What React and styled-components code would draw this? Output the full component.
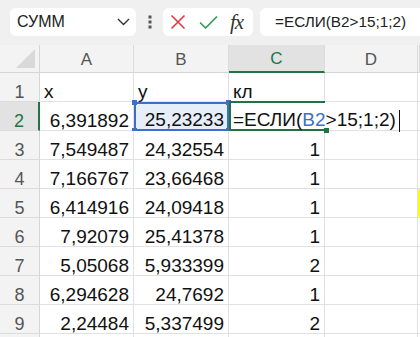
import React from "react";
import styled, { createGlobalStyle } from "styled-components";

const GlobalStyle = createGlobalStyle`
  html, body {
    margin: 0;
    padding: 0;
    background: #ffffff;
    overflow: hidden;
  }
  body {
    font-family: "Liberation Sans", Arial, sans-serif;
  }
`;

const Page = styled.div`
  width: 420px;
  height: 337px;
  overflow: hidden;
  background: #ffffff;
`;

const Toolbar = styled.div`
  display: flex;
  align-items: flex-start;
  height: 45px;
  box-sizing: border-box;
  padding: 8px 0 0 10px;
  background: #f0f0f0;
`;

const NameBox = styled.div`
  display: flex;
  align-items: center;
  justify-content: space-between;
  width: 126px;
  height: 28px;
  box-sizing: border-box;
  padding: 0 6px 0 7px;
  background: #ffffff;
  border-radius: 6px;
  font-size: 16px;
  color: #222;
`;

const Grip = styled.div`
  display: flex;
  align-items: center;
  justify-content: center;
  width: 27px;
  height: 28px;
`;

const ButtonBox = styled.div`
  display: flex;
  align-items: center;
  gap: 13px;
  width: 90px;
  height: 28px;
  box-sizing: border-box;
  padding: 0 0 0 7px;
  background: #ffffff;
  border-radius: 6px;
`;

const Fx = styled.span`
  font-family: "Liberation Serif", "Times New Roman", serif;
  font-style: italic;
  font-size: 21px;
  color: #333;
  letter-spacing: -1px;
  margin-left: -1px;
`;

const FormulaBox = styled.div`
  display: flex;
  align-items: center;
  flex: 1;
  height: 28px;
  margin-left: 7px;
  padding-left: 15px;
  background: #ffffff;
  border-radius: 6px 0 0 6px;
  font-size: 15.3px;
  color: #222;
  white-space: nowrap;
`;

const Grid = styled.div`
  display: grid;
  grid-template-columns: 40px 94px 95px 96px 93px 2px;
  grid-template-rows: 28px repeat(9, 29px) 29px;
`;

const Corner = styled.div`
  display: flex;
  align-items: flex-end;
  justify-content: flex-end;
  padding: 0 4px 4px 0;
  background: #f3f3f3;
  border-right: 1px solid #d6d6d6;
  border-bottom: 1px solid #d6d6d6;
  box-sizing: border-box;
`;

const Triangle = styled.div`
  width: 0;
  height: 0;
  border-left: 19px solid transparent;
  border-bottom: 19px solid #d9d9d9;
`;

const ColHead = styled.div`
  display: flex;
  align-items: center;
  justify-content: center;
  padding-top: 2px;
  box-sizing: border-box;
  font-size: 17px;
  color: ${(p) => (p.$active ? "#217346" : "#555")};
  background: ${(p) => (p.$active ? "#e2e2e2" : "#f3f3f3")};
  border-right: 1px solid #dcdcdc;
  border-bottom: ${(p) => (p.$active ? "2px solid #217346" : "1px solid #d6d6d6")};
`;

const RowHead = styled.div`
  display: flex;
  align-items: flex-end;
  justify-content: center;
  line-height: 1;
  box-sizing: border-box;
  padding-bottom: 0;
  font-size: 18px;
  color: ${(p) => (p.$active ? "#217346" : "#555")};
  background: ${(p) => (p.$active ? "#e2e2e2" : "#f3f3f3")};
  border-bottom: 1px solid #dcdcdc;
  border-right: ${(p) => (p.$active ? "2px solid #217346" : "1px solid #d6d6d6")};
`;

const Cell = styled.div`
  position: relative;
  display: flex;
  align-items: flex-end;
  justify-content: ${(p) => (p.$left ? "flex-start" : "flex-end")};
  padding: 0 4px;
  box-sizing: border-box;
  line-height: 1;
  font-size: 19px;
  color: #111;
  white-space: nowrap;
  background: ${(p) => p.$fill || "#ffffff"};
  border-right: 1px solid #e1e1e1;
  border-bottom: 1px solid #e1e1e1;
`;

const RefCell = styled(Cell)`
  background: #e6eefa;
  border: 2px solid #3d6fc2;
  padding-right: 3px;
`;

const Handle = styled.span`
  position: absolute;
  width: 5px;
  height: 5px;
  background: ${(p) => p.$color};
  ${(p) => (p.$top ? "top: -4px;" : "bottom: -4px;")}
  ${(p) => (p.$leftSide ? "left: -4px;" : "right: -4px;")}
`;

const EditCell = styled(Cell)`
  z-index: 2;
  overflow: visible;
  padding-left: 2px;
  border-top: 2px solid #217346;
  border-left: 2px solid #217346;
  border-bottom: 2px solid #217346;
  border-right: none;
  margin-top: -1px;
`;

const Ref = styled.span`
  color: #3d6fc2;
`;

const Caret = styled.span`
  flex-shrink: 0;
  display: inline-block;
  width: 1px;
  height: 22px;
  margin-left: 3px;
  margin-bottom: -3px;
  background: #111;
`;

const rows = [
  ["x", "y", "кл"],
  ["6,391892", "25,23233", null],
  ["7,549487", "24,32554", "1"],
  ["7,166767", "23,66468", "1"],
  ["6,414916", "24,09418", "1"],
  ["7,92079", "25,41378", "1"],
  ["5,05068", "5,933399", "2"],
  ["6,294628", "24,7692", "1"],
  ["2,24484", "5,337499", "2"],
  ["", "", ""],
];

const X = () => (
  <svg width="16" height="16" viewBox="0 0 16 16">
    <path d="M1.5 1.5 L14.5 14.5 M14.5 1.5 L1.5 14.5" stroke="#e0393e" strokeWidth="1.6" fill="none" />
  </svg>
);

const Check = () => (
  <svg width="19" height="14" viewBox="0 0 19 14">
    <path d="M1 7.5 L6.5 13 L18 1.5" stroke="#2e9a56" strokeWidth="1.6" fill="none" />
  </svg>
);

const Chevron = () => (
  <svg width="13" height="8" viewBox="0 0 13 8">
    <path d="M1 1 L6.5 6.5 L12 1" stroke="#333" strokeWidth="1.4" fill="none" />
  </svg>
);

const Dots = () => (
  <svg width="4" height="14" viewBox="0 0 4 14">
    <rect x="0.5" y="0.5" width="3" height="3" fill="#555" />
    <rect x="0.5" y="5.5" width="3" height="3" fill="#555" />
    <rect x="0.5" y="10.5" width="3" height="3" fill="#555" />
  </svg>
);

const App = () => {
  return (
    <Page>
      <GlobalStyle />
      <Toolbar>
        <NameBox>
          <span>СУММ</span>
          <Chevron />
        </NameBox>
        <Grip>
          <Dots />
        </Grip>
        <ButtonBox>
          <X />
          <Check />
          <Fx>fx</Fx>
        </ButtonBox>
        <FormulaBox>=ЕСЛИ(B2&gt;15;1;2)</FormulaBox>
      </Toolbar>
      <Grid>
        <Corner>
          <Triangle />
        </Corner>
        {["A", "B", "C", "D", ""].map((c, i) => (
          <ColHead key={i} $active={c === "C"}>
            {c}
          </ColHead>
        ))}
        {rows.map((r, i) => {
          const n = i + 1;
          return (
            <React.Fragment key={n}>
              <RowHead $active={n === 2}>{n < 10 ? n : ""}</RowHead>
              {n === 2 ? (
                <>
                  <Cell>{r[0]}</Cell>
                  <RefCell>
                    {r[1]}
                    <Handle $color="#3d6fc2" $top $leftSide />
                    <Handle $color="#3d6fc2" $top />
                    <Handle $color="#3d6fc2" $leftSide />
                    <Handle $color="#3d6fc2" />
                  </RefCell>
                  <EditCell $left>
                    =ЕСЛИ(<Ref>B2</Ref>&gt;15;1;2)
                    <Caret />
                    <Handle $color="#217346" />
                  </EditCell>
                  <Cell />
                  <Cell />
                </>
              ) : (
                <>
                  <Cell $left={n === 1}>{r[0]}</Cell>
                  <Cell $left={n === 1}>{r[1]}</Cell>
                  <Cell $left={n === 1}>{r[2]}</Cell>
                  <Cell />
                  <Cell $fill={n === 5 ? "#ffff00" : undefined} />
                </>
              )}
            </React.Fragment>
          );
        })}
      </Grid>
    </Page>
  );
};

export default App;
